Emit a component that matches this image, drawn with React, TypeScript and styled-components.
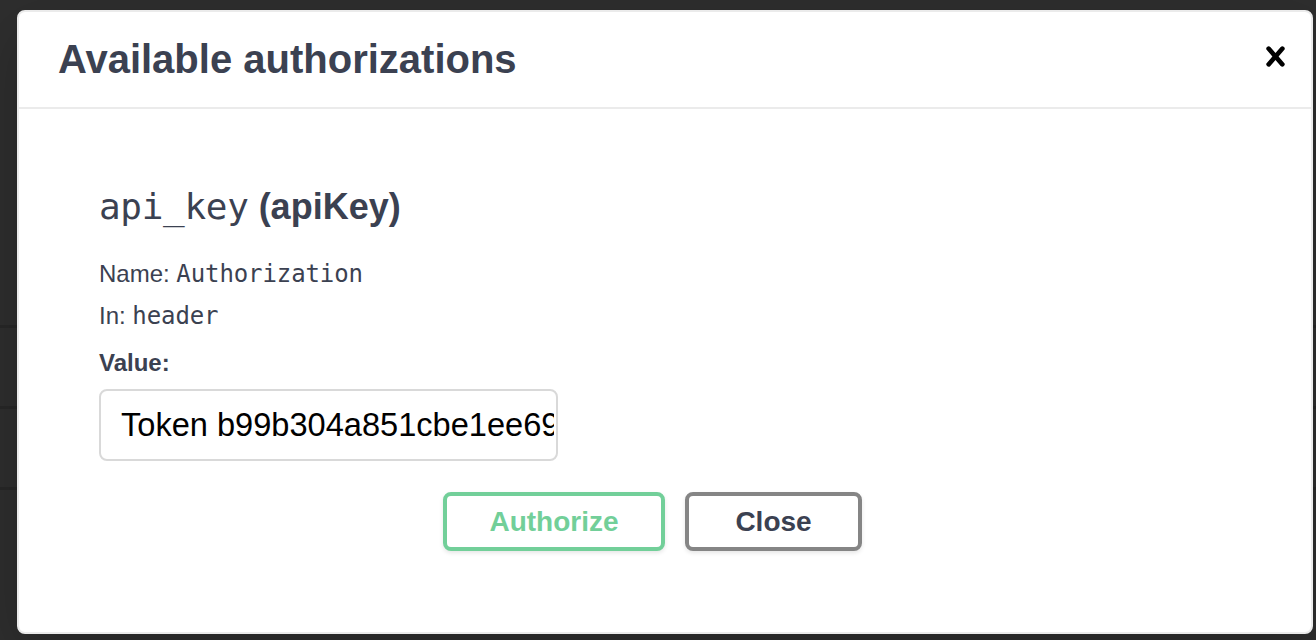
import React from "react";
import styled, { createGlobalStyle } from "styled-components";

const GlobalStyle = createGlobalStyle`
  html, body {
    margin: 0;
    padding: 0;
  }
  body {
    width: 1316px;
    height: 640px;
    overflow: hidden;
    background-color: #2e2e2e;
    background-image:
      linear-gradient(to bottom,
        transparent 0, transparent 325px,
        #272727 325px, #272727 328px,
        transparent 328px, transparent 406px,
        #272727 406px, #272727 409px,
        transparent 409px, transparent 487px,
        #272727 487px, #272727 490px,
        transparent 490px);
    font-family: "Liberation Sans", Arial, sans-serif;
  }
`;

const Backdrop = styled.div`
  padding: 10px 0 0 17px;
`;

const Modal = styled.div`
  box-sizing: border-box;
  width: 1296px;
  height: 624px;
  background: #fff;
  border: 2px solid #ebebeb;
  border-radius: 8px;
  box-shadow: 0 20px 60px 0 rgba(0, 0, 0, 0.2);
  display: flex;
  flex-direction: column;
  overflow: hidden;
`;

const Header = styled.div`
  display: flex;
  align-items: center;
  padding: 24px 0;
  border-bottom: 2px solid #ebebeb;
`;

const Title = styled.h3`
  flex: 1;
  margin: 0;
  padding: 0 40px 0 39px;
  font-family: "Liberation Sans", Arial, sans-serif;
  font-size: 40px;
  line-height: 47px;
  font-weight: 700;
  color: #3b4151;
`;

const CloseIcon = styled.button`
  border: none;
  background: none;
  padding: 0 16px 0 24px;
  margin-bottom: 6px;
  display: flex;
  cursor: pointer;
  svg {
    width: 39px;
    height: 39px;
    fill: #000;
  }
`;

const Content = styled.div`
  padding: 40px;
`;

const AuthContainer = styled.div`
  padding: 20px 40px;
`;

const SchemeTitle = styled.h4`
  margin: 10px 0 18px;
  line-height: 56px;
  font-size: 36px;
  color: #3b4151;
  font-family: "Liberation Sans", Arial, sans-serif;
  font-weight: 700;
`;

const Code = styled.code<{ $size: number }>`
  font-family: "DejaVu Sans Mono", "Liberation Mono", monospace;
  font-weight: 400;
  font-size: ${(p) => p.$size}px;
  letter-spacing: ${(p) => (p.$size > 30 ? -0.3 : -0.1)}px;
`;

const InfoLine = styled.p`
  margin: 0;
  font-size: 24px;
  line-height: 42px;
  color: #3b4151;
`;

const FieldLabel = styled.label`
  display: block;
  margin: 11px 0 11px;
  font-size: 24px;
  line-height: 30px;
  font-weight: 700;
  color: #3b4151;
`;

const ValueInput = styled.input`
  box-sizing: border-box;
  display: block;
  width: 459px;
  height: 72px;
  padding: 0 2px 0 20px;
  border: 2px solid #d9d9d9;
  border-radius: 8px;
  background: #fff;
  font-family: "Liberation Sans", Arial, sans-serif;
  font-size: 32.6px;
  color: #000;
  outline: none;
`;

const ButtonRow = styled.div`
  display: flex;
  justify-content: center;
  margin-top: 31px;
`;

const Button = styled.button<{ $variant: "authorize" | "close" }>`
  box-sizing: border-box;
  height: 59px;
  width: ${(p) => (p.$variant === "authorize" ? 222 : 177)}px;
  margin-right: ${(p) => (p.$variant === "authorize" ? 20 : 25)}px;
  border: 4px solid ${(p) => (p.$variant === "authorize" ? "#72cf99" : "#858585")};
  color: ${(p) => (p.$variant === "authorize" ? "#72cf99" : "#3b4151")};
  border-radius: 8px;
  background: #fff;
  box-shadow: 0 2px 4px rgba(0, 0, 0, 0.1);
  font-family: "Liberation Sans", Arial, sans-serif;
  font-size: 28px;
  font-weight: 700;
  padding: 0;
  cursor: pointer;
`;

export default function App() {
  return (
    <>
      <GlobalStyle />
      <Backdrop>
        <Modal>
          <Header>
            <Title>Available authorizations</Title>
            <CloseIcon aria-label="Close">
              <svg viewBox="0 0 20 20" aria-hidden="true">
                <path d="M14.348 14.849a1.2 1.2 0 0 1-1.697 0L10 11.819l-2.651 3.029a1.2 1.2 0 1 1-1.697-1.697l2.758-3.15-2.759-3.152a1.2 1.2 0 1 1 1.697-1.697L10 8.183l2.651-3.031a1.2 1.2 0 1 1 1.697 1.697l-2.758 3.152 2.758 3.15a1.2 1.2 0 0 1 0 1.698z" />
              </svg>
            </CloseIcon>
          </Header>
          <Content>
            <AuthContainer>
              <SchemeTitle>
                <Code $size={36}>api_key</Code> (apiKey)
              </SchemeTitle>
              <InfoLine>
                Name: <Code $size={24}>Authorization</Code>
              </InfoLine>
              <InfoLine>
                In: <Code $size={24}>header</Code>
              </InfoLine>
              <FieldLabel htmlFor="auth-value">Value:</FieldLabel>
              <ValueInput
                id="auth-value"
                type="text"
                readOnly
                value="Token b99b304a851cbe1ee69f2c7d8a0e4b5c6d7e8f90"
              />
              <ButtonRow>
                <Button $variant="authorize">Authorize</Button>
                <Button $variant="close">Close</Button>
              </ButtonRow>
            </AuthContainer>
          </Content>
        </Modal>
      </Backdrop>
    </>
  );
}
